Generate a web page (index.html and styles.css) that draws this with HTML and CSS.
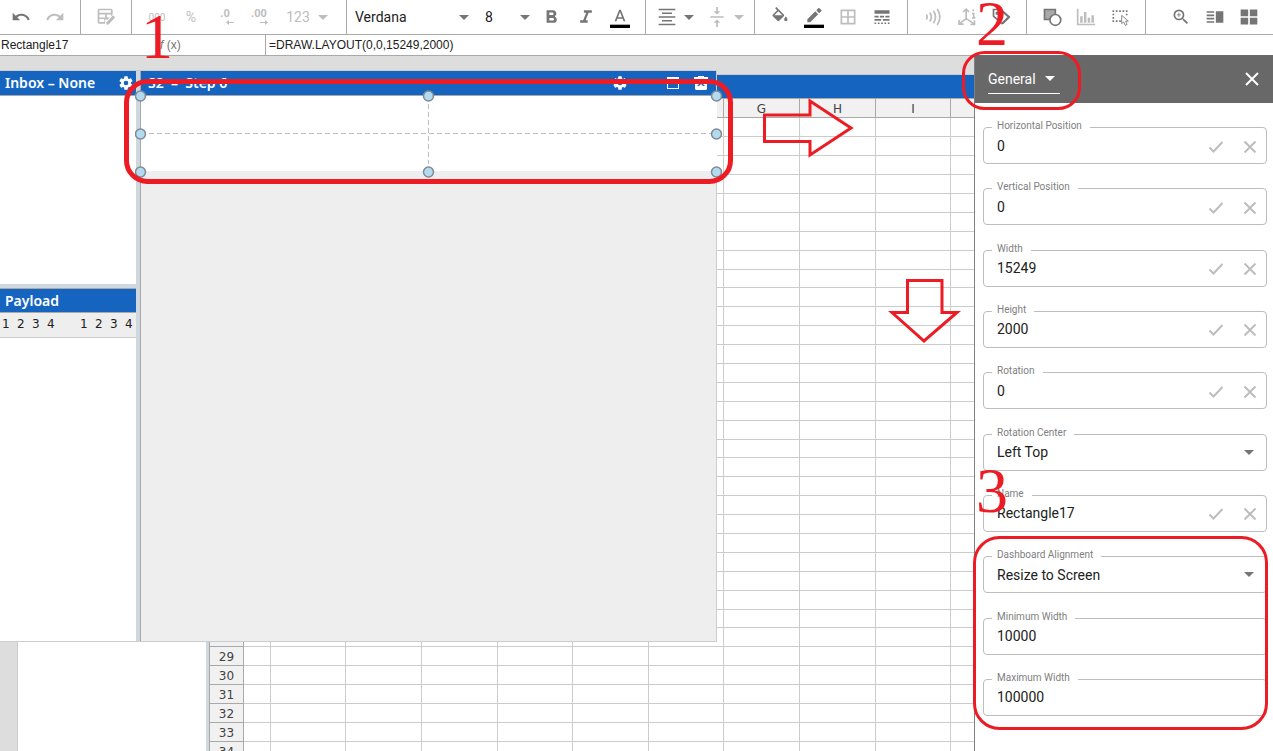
FILE: index.html
```html
<!DOCTYPE html>
<html lang="en">
<head>
<meta charset="utf-8">
<title>Dashboard Designer</title>
<link rel="stylesheet" href="styles.css">
</head>
<body>
<div class="app">
  <header class="toolbar">
    <div class="group group-first">
      <button class="tool" aria-label="Undo"><svg viewBox="0 0 24 24"><path d="M12.5 8c-2.65 0-5.05.99-6.9 2.6L2 7v9h9l-3.62-3.62c1.39-1.16 3.16-1.88 5.12-1.88 3.54 0 6.55 2.31 7.6 5.5l2.37-.78C21.08 11.03 17.15 8 12.5 8z"/></svg></button>
      <button class="tool off" aria-label="Redo"><svg viewBox="0 0 24 24"><path d="M18.4 10.6C16.55 8.99 14.15 8 11.5 8c-4.65 0-8.58 3.03-9.96 7.22L3.9 16c1.05-3.19 4.05-5.5 7.6-5.5 1.95 0 3.73.72 5.12 1.88L13 16h9V7l-3.6 3.6z"/></svg></button>
    </div>
    <div class="group">
      <button class="tool off" aria-label="Edit table"><svg viewBox="0 0 24 24"><path fill-rule="evenodd" d="M4 2h14a2 2 0 0 1 2 2v5l-2 2V9h-5v3.500h3.500L13 16v-1h-2v5H4a2 2 0 0 1-2-2V4a2 2 0 0 1 2-2zM4 9v3.500h7V9zM4 14.500V18h6v-3.500zM4 4v3h14V4z"/><path d="M20.500 10l2.500 2.500-8 8.500h-2.500v-2.500z"/></svg></button>
    </div>
    <div class="group">
      <button class="tool off" aria-label="Thousands separator"><span class="mini">000</span></button>
      <button class="tool off" aria-label="Percent"><span class="percent">%</span></button>
      <button class="tool off decimals" aria-label="Fewer decimals"><span>.0</span><svg class="tiny" viewBox="0 0 8 6"><path d="M3 0v2h5v1H3v2L0 2.500z"/></svg></button>
      <button class="tool off decimals" aria-label="More decimals"><span>.00</span><svg class="tiny" viewBox="0 0 8 6"><path d="M5 0v2H0v1h5v2l3-2.500z"/></svg></button>
      <button class="tool off numfmt" aria-label="Number format"><span>123</span><svg class="caret" viewBox="0 0 10 5"><path d="M0 0h10L5 5z"/></svg></button>
    </div>
    <div class="group">
      <span class="pick pick-font"><select aria-label="Font"><option>Verdana</option></select><svg class="caret" viewBox="0 0 10 5"><path d="M0 0h10L5 5z"/></svg></span>
      <span class="pick pick-size"><select aria-label="Font size"><option>8</option></select><svg class="caret" viewBox="0 0 10 5"><path d="M0 0h10L5 5z"/></svg></span>
      <button class="tool" aria-label="Bold"><svg viewBox="0 0 24 24"><path d="M15.600 10.790c.97-.67 1.650-1.770 1.650-2.790 0-2.260-1.750-4-4-4H5.500v15h8.540c2.090 0 3.710-1.700 3.710-3.790 0-1.520-.86-2.820-2.150-3.420zM8.800 6.700h3.500c.83 0 1.500.67 1.500 1.500s-.67 1.500-1.500 1.500H8.800zm4 9.600h-4v-3.200h4c.83 0 1.600.77 1.600 1.600s-.77 1.600-1.600 1.600z"/></svg></button>
      <button class="tool" aria-label="Italic"><svg viewBox="0 0 24 24"><path d="M9.500 4v3h2.700l-3.600 9H5v3h9v-3h-2.500l3.600-9H19V4z"/></svg></button>
      <button class="tool inked" aria-label="Text colour"><svg viewBox="0 0 24 24"><path d="M11 2L5.500 16h2.250l1.120-3h6.250l1.120 3h2.250L13 2zm-1.380 9L12 4.670 14.380 11z"/><path class="ink" d="M0 20h24v4H0z"/></svg></button>
    </div>
    <div class="group group-split">
      <button class="tool split" aria-label="Horizontal alignment"><svg viewBox="0 0 24 24"><path d="M2 2h20v2H2zM6 6.500h12v2H6zM2 11h20v2H2zM6 15.500h12v2H6zM2 20h20v2H2z"/></svg><svg class="caret" viewBox="0 0 10 5"><path d="M0 0h10L5 5z"/></svg></button>
      <button class="tool off split" aria-label="Vertical alignment"><svg viewBox="0 0 24 24"><path d="M4 11h16v2H4zM11 0h2v5h3l-4 4-4-4h3zM11 24h2v-5h3l-4-4-4 4h3z"/></svg><svg class="caret" viewBox="0 0 10 5"><path d="M0 0h10L5 5z"/></svg></button>
    </div>
    <div class="group">
      <button class="tool" aria-label="Fill colour"><svg viewBox="0 0 24 24"><path d="M16.560 8.940L7.620 0 6.210 1.410l2.380 2.380-5.150 5.150c-.59.59-.59 1.540 0 2.120l5.500 5.500c.29.29.68.44 1.060.44s.77-.15 1.060-.44l5.500-5.500c.59-.58.59-1.530 0-2.120zM5.210 10L10 5.210 14.790 10zM19 11.500s-2 2.170-2 3.500c0 1.100.9 2 2 2s2-.9 2-2c0-1.330-2-3.500-2-3.500z"/></svg></button>
      <button class="tool inked" aria-label="Line colour"><svg viewBox="0 0 24 24"><path d="M4 13.500V17h3.500L17 7.500 13.500 4zM20.700 3.800a1 1 0 0 0 0-1.400L18.600.3a1 1 0 0 0-1.400 0L14.700 2.800l3.500 3.500z"/><path class="ink" d="M0 20h24v4H0z"/></svg></button>
      <button class="tool off" aria-label="Borders"><svg viewBox="0 0 24 24"><path fill-rule="evenodd" d="M3 3h18v18H3zM5 5v6h6V5zM13 5v6h6V5zM5 13v6h6v-6zM13 13v6h6v-6z"/></svg></button>
      <button class="tool" aria-label="Line style"><svg viewBox="0 0 24 24"><path d="M3 4h18v4H3zM3 10.500h5v2H3zM9.500 10.500h5v2h-5zM16 10.500h5v2h-5zM3 14.500h8v2H3zM13 14.500h8v2h-8zM3 18.500h2v2H3zM7 18.500h2v2H7zM11 18.500h2v2h-2zM15 18.500h2v2h-2zM19 18.500h2v2h-2z"/></svg></button>
    </div>
    <div class="group">
      <button class="tool off" aria-label="Signals"><svg class="line" viewBox="0 0 24 24"><path d="M4 9q2 3 0 6M8 6.500q4 5.500 0 11M12.500 4.500q5 7.500 0 15M17 2.500q6.500 9.500 0 19"/></svg></button>
      <button class="tool off" aria-label="Axes"><svg class="line" viewBox="0 0 24 24"><path d="M11 3v11M11 14l-8 6M11 14l9 6M7.500 6L11 2.500 14.500 6M2.500 15.500v5H8M16 21h5v-5M19.500 3v2M18 8h2v5M18 13h4"/></svg></button>
      <button class="tool" aria-label="Tags"><svg class="line" viewBox="0 0 24 24"><path d="M3 3h8l10 9-8 8-10-9zM14 5l8 7-8 8"/><circle cx="7.500" cy="7.500" r="1.200"/></svg></button>
    </div>
    <div class="group">
      <button class="tool" aria-label="Shapes"><svg class="line" viewBox="0 0 24 24"><path class="shade" d="M3 3h13v12H3z"/><circle class="paper" cx="16" cy="15.500" r="6.500"/></svg></button>
      <button class="tool off" aria-label="Charts"><svg viewBox="0 0 24 24"><path d="M1 2h2v18h20v2H1zM5 11h3v8H5zM9.500 6h3v13h-3zM14 13h3v6h-3zM18.500 10h3v9h-3z"/></svg></button>
      <button class="tool" aria-label="Select objects"><svg viewBox="0 0 24 24"><path d="M3 4h2v2H3zM7 4h2v2H7zM11 4h2v2h-2zM15 4h2v2h-2zM19 4h2v2h-2zM3 8h2v2H3zM3 12h2v2H3zM3 16h2v2H3zM7 16h2v2H7zM11 16h2v2h-2zM19 8h2v2h-2z"/><path class="arrow" d="M14 10v10l2.500-2 1.700 4 2.300-1-1.700-4H22z"/></svg></button>
    </div>
    <div class="group group-last">
      <button class="tool" aria-label="Zoom in"><svg viewBox="0 0 24 24"><path d="M15.500 14h-.79l-.28-.27A6.471 6.471 0 0 0 16 9.500 6.500 6.500 0 1 0 9.500 16c1.610 0 3.090-.59 4.230-1.570l.27.280v.79l5 4.990L20.490 19zm-6 0C7.010 14 5 11.990 5 9.500S7.010 5 9.500 5 14 7.010 14 9.500 11.990 14 9.500 14zM12 10h-2v2H9v-2H7V9h2V7h1v2h2z"/></svg></button>
      <button class="tool" aria-label="Side panel"><svg viewBox="0 0 24 24"><path d="M2 5h9v2H2zM2 9h9v2H2zM2 13h9v2H2zM2 17h9v2H2zM13 5h9v14h-9z"/></svg></button>
      <button class="tool" aria-label="Tiles"><svg viewBox="0 0 24 24"><path d="M2 3h9v8H2zM13 3h9v8h-9zM2 13h9v8H2zM13 13h9v8h-9z"/></svg></button>
    </div>
  </header>

  <div class="formula">
    <input class="formula-name" aria-label="Object name" value="Rectangle17">
    <span class="formula-fx"><i>f</i> (x)</span>
    <input class="formula-text" aria-label="Formula" value="=DRAW.LAYOUT(0,0,15249,2000)">
  </div>

  <div class="body">
    <main class="desk">
      <div class="document">
        <div class="outline"></div>
        <section class="sheet">
          <div class="sheet-title"></div>
          <table class="cells">
            <colgroup><col class="c-num"><col class="c-label"><col class="c-a"><col><col><col class="c-a"><col><col class="c-a"><col><col><col class="c-a"><col></colgroup>
            <thead><tr><th></th><th></th><th>A</th><th>B</th><th>C</th><th>D</th><th>E</th><th>F</th><th>G</th><th>H</th><th>I</th><th>J</th></tr></thead>
            <tbody id="rows"></tbody>
          </table>
        </section>
      </div>

      <section class="window">
        <div class="side">
          <div class="side-inbox">
            <h2 class="bar">Inbox – None
              <button class="bar-btn" aria-label="Inbox settings"><svg viewBox="0 0 24 24"><path fill-rule="evenodd" d="M19.430 12.980c.04-.32.07-.64.07-.98s-.03-.66-.07-.98l2.110-1.650a.5.5 0 0 0 .12-.64l-2-3.460a.5.5 0 0 0-.61-.22l-2.490 1a7.300 7.300 0 0 0-1.690-.98l-.38-2.650A.49.49 0 0 0 14 2h-4a.49.49 0 0 0-.49.42l-.38 2.650c-.61.25-1.170.59-1.690.98l-2.490-1a.5.5 0 0 0-.61.22l-2 3.460a.5.5 0 0 0 .12.64l2.110 1.650c-.04.32-.07.65-.07.98s.03.66.07.98l-2.110 1.650a.5.5 0 0 0-.12.64l2 3.460c.12.22.39.3.61.22l2.490-1c.52.4 1.080.73 1.690.98l.38 2.650c.03.24.24.42.49.42h4c.25 0 .46-.18.49-.42l.38-2.650c.61-.25 1.170-.59 1.690-.98l2.490 1c.23.09.49 0 .61-.22l2-3.460a.5.5 0 0 0-.12-.64zM12 15.500a3.500 3.500 0 1 1 0-7 3.500 3.500 0 0 1 0 7z"/></svg></button>
            </h2>
          </div>
          <div class="side-payload">
            <h2 class="bar">Payload</h2>
            <div class="digits"><span>1</span><span>2</span><span>3</span><span>4</span><span class="next">1</span><span>2</span><span>3</span><span>4</span></div>
          </div>
        </div>
        <div class="step">
          <h2 class="bar">S2&nbsp; – &nbsp;Step 6
            <span class="bar-tools">
              <button class="bar-btn" aria-label="Step settings"><svg viewBox="0 0 24 24"><path fill-rule="evenodd" d="M19.430 12.980c.04-.32.07-.64.07-.98s-.03-.66-.07-.98l2.110-1.650a.5.5 0 0 0 .12-.64l-2-3.460a.5.5 0 0 0-.61-.22l-2.490 1a7.300 7.300 0 0 0-1.690-.98l-.38-2.650A.49.49 0 0 0 14 2h-4a.49.49 0 0 0-.49.42l-.38 2.650c-.61.25-1.170.59-1.690.98l-2.490-1a.5.5 0 0 0-.61.22l-2 3.460a.5.5 0 0 0 .12.64l2.110 1.650c-.04.32-.07.65-.07.98s.03.66.07.98l-2.110 1.650a.5.5 0 0 0-.12.64l2 3.460c.12.22.39.3.61.22l2.490-1c.52.4 1.080.73 1.690.98l.38 2.650c.03.24.24.42.49.42h4c.25 0 .46-.18.49-.42l.38-2.650c.61-.25 1.170-.59 1.690-.98l2.490 1c.23.09.49 0 .61-.22l2-3.460a.5.5 0 0 0-.12-.64zM12 15.500a3.500 3.500 0 1 1 0-7 3.500 3.500 0 0 1 0 7z"/></svg></button>
              <button class="bar-btn" aria-label="Maximize"><svg viewBox="0 0 16 16"><path fill-rule="evenodd" d="M2 2h12v12H2zM3 4v9h10V4z"/></svg></button>
              <button class="bar-btn" aria-label="Delete"><svg viewBox="0 0 16 16"><path fill-rule="evenodd" d="M5 1h6v1h4v3h-1v9l-1 1H3l-1-1V5H1V2h4zM4 11h2l2-2 2 2h2L8 7z"/></svg></button>
            </span>
          </h2>
          <div class="canvas">
            <svg class="shape" viewBox="0 0 588 88">
              <path class="shape-fill" d="M6 6h576v75H6z"/>
              <path class="guide" d="M14 43.500h562M293.500 14v60"/>
              <g class="handle"><circle cx="5.500" cy="6" r="5"/><circle cx="293.500" cy="6" r="5"/><circle cx="581.500" cy="6" r="5"/><circle cx="5.500" cy="44" r="5"/><circle cx="581.500" cy="44" r="5"/><circle cx="5.500" cy="82" r="5"/><circle cx="293.500" cy="82" r="5"/><circle cx="581.500" cy="82" r="5"/></g>
            </svg>
          </div>
        </div>
      </section>
    </main>

    <aside class="inspector">
      <div class="inspector-head">
        <span class="pick pick-page"><select aria-label="Property page"><option>General</option></select><svg class="caret" viewBox="0 0 10 5"><path d="M0 0h10L5 5z"/></svg></span>
        <button class="close" aria-label="Close panel"><svg viewBox="0 0 14 14"><path d="M1 1l12 12M13 1L1 13"/></svg></button>
      </div>
      <form class="fields" id="fields"></form>
    </aside>
  </div>

  <svg class="notes" width="1273" height="751" viewBox="0 0 1273 751" aria-label="Annotations">
    <rect class="thick" x="126.500" y="81.500" width="604" height="100" rx="21"/>
    <rect x="963.500" y="52.500" width="116" height="56" rx="21"/>
    <rect x="974.500" y="537.500" width="292" height="191" rx="25"/>
    <path d="M764.500 115H810v-14l41 27-41 27v-13.500h-45.500z"/>
    <path d="M907.500 280.500H942v32h15L924 341l-32-28.500h15.500z"/>
    <text x="141" y="58">1</text>
    <text x="976" y="45">2</text>
    <text x="976" y="512">3</text>
  </svg>
</div>
<script src="app.js"></script>
</body>
</html>
```
FILE: styles.css
```css
* { box-sizing: border-box; }

body {
  margin: 0;
  font-family: Roboto, "Liberation Sans", sans-serif;
  font-size: 14px;
  color: #212121;
  background: #fff;
}

button, input, select {
  margin: 0;
  padding: 0;
  border: 0;
  background: none;
  font: inherit;
  color: inherit;
  appearance: none;
  outline: none;
}

button { cursor: pointer; }

.app {
  position: relative;
  display: flex;
  flex-direction: column;
  height: 100vh;
  overflow: hidden;
}

/* Toolbar */
.toolbar {
  display: flex;
  flex: none;
  height: 35px;
  border-bottom: 1px solid #a9a9a9;
}

.group {
  display: flex;
  align-items: center;
  padding: 0 8px;
  border-right: 1px solid #a9a9a9;
}

.group-first { padding-left: 4px; }
.group-split { gap: 8px; }
.group-last { margin-left: auto; padding-right: 7px; border-right: 0; }

.tool {
  display: flex;
  align-items: center;
  justify-content: center;
  width: 34px;
  height: 34px;
  color: #757575;
}

.tool svg { width: 20px; height: 20px; fill: currentColor; }
.tool.off { color: #bdbdbd; }
.tool .line { fill: none; stroke: currentColor; stroke-width: 2; }
.tool .shade { fill: #a9a9a9; }
.tool .paper { fill: #fff; }
.tool .arrow { fill: #fff; stroke: currentColor; stroke-width: 1; }
.tool .ink { fill: #000; }
.tool.inked { padding-top: 2px; }

.tool svg.caret, .caret { width: 10px; height: 5px; fill: currentColor; }
.tool svg.tiny { width: 8px; height: 6px; }

.tool.numfmt { width: 62px; gap: 8px; }
.tool.split { width: 42px; gap: 7px; }
.mini { font-size: 10px; }
.percent { font-size: 14px; }

.decimals {
  flex-direction: column;
  align-items: center;
  font-size: 11px;
  font-weight: 700;
  line-height: 12px;
}
.decimals svg { align-self: flex-end; margin-right: 8px; }

.pick { position: relative; display: flex; align-items: center; }
.pick select { width: 100%; }
.pick .caret { position: absolute; color: #757575; pointer-events: none; }
.pick-font { width: 126px; margin-right: 4px; }
.pick-font .caret { right: 12px; }
.pick-size { width: 50px; }
.pick-size .caret { right: 5px; }

/* Formula bar */
.formula {
  display: flex;
  flex: none;
  height: 20px;
  font-family: "Liberation Sans", Arial, sans-serif;
  font-size: 12px;
}
.formula-name { width: 160px; padding-left: 1px; }
.formula-fx { width: 105px; line-height: 20px; color: #757575; }
.formula-text { flex: 1; padding-left: 3px; border-left: 1px solid #a9a9a9; }

.body { display: flex; flex: 1; min-height: 0; }

/* Desk with the document below the floating window */
.desk {
  position: relative;
  flex: 1;
  min-width: 0;
  padding-top: 18px;
  overflow: hidden;
  border-top: 1px solid #a9a9a9;
  background: #ddd;
}

.document {
  display: flex;
  height: 100%;
  padding-left: 17px;
  border-top: 1px solid #ccc;
}

.outline {
  flex: none;
  width: 192px;
  border-left: 1px solid #ccc;
  border-right: 3px solid #cfd8df;
  background: #fff;
}

.sheet {
  flex: 1;
  min-width: 0;
  overflow: hidden;
  border-left: 1px solid #a9a9a9;
  background: #fff;
}

.sheet-title { height: 23px; background: #1565c0; }

.cells {
  width: 810px;
  table-layout: fixed;
  border-spacing: 0;
  font-family: "DejaVu Sans", Verdana, sans-serif;
  font-size: 12px;
  line-height: 16px;
  color: #424242;
}

.cells col { width: 76px; }
.cells .c-a { width: 75px; }
.cells .c-num { width: 34px; }
.cells .c-label { width: 27px; }

.cells th, .cells td {
  height: 19px;
  padding: 0;
  border-right: 1px solid #ccc;
  border-bottom: 1px solid #ccc;
}

.cells th {
  border-color: #a9a9a9;
  background: #f1f1f1;
  font-weight: 400;
  text-align: center;
}

.cells thead th { height: 20px; padding-top: 1px; border-top: 1px solid #a9a9a9; }
.cells tbody th { padding-top: 1px; }
.cells tbody tr:nth-child(9n) > * { height: 18px; }

/* Floating dashboard window */
.window {
  position: absolute;
  left: 0;
  top: 14px;
  display: flex;
  width: 717px;
  height: 572px;
  border: solid #ccc;
  border-width: 1px 1px 1px 0;
  background: #fff;
}

.side {
  display: flex;
  flex: none;
  flex-direction: column;
  width: 140px;
  border-right: 4px solid #cfd8df;
}

.side-inbox { flex: none; height: 217px; border-bottom: 4px solid #cfd8df; }
.side-payload { border-top: 1px solid #a9a9a9; }

.bar {
  display: flex;
  align-items: center;
  justify-content: space-between;
  height: 25px;
  margin: 0;
  padding: 0 2px 0 5px;
  border-bottom: 1px solid #a9a9a9;
  background: #1565c0;
  font-family: "Noto Sans", "Open Sans", sans-serif;
  font-size: 14px;
  font-weight: 600;
  line-height: 24px;
  color: #fff;
}
.side-payload .bar { height: 24px; }

.bar-btn { display: flex; }
.bar-btn svg { width: 16px; height: 16px; fill: #fff; }

.bar-tools { display: flex; }
.bar-tools .bar-btn { margin-left: 12px; }
.bar-tools .bar-btn:first-child { margin-right: 25px; }

.digits {
  display: flex;
  height: 25px;
  padding-left: 2px;
  border-bottom: 1px solid #ccc;
  background: #eee;
  font-family: "DejaVu Sans", Verdana, sans-serif;
  font-size: 12px;
  line-height: 22px;
  color: #212121;
}
.digits span { flex: none; width: 15px; }
.digits .next { margin-left: 18px; }

.step {
  display: flex;
  flex: 1;
  flex-direction: column;
  min-width: 0;
  border-left: 1px solid #a9a9a9;
}
.step .bar { padding: 0 7px; }

.canvas { position: relative; flex: 1; background: #eee; }

.shape {
  position: absolute;
  left: -6px;
  top: -6px;
  width: 588px;
  height: 88px;
}
.shape-fill { fill: #fff; }
.guide { fill: none; stroke: #bdbdbd; stroke-dasharray: 5 3; }
.handle { fill: #b3daf0; stroke: #808b91; stroke-width: 1.5; }

/* Inspector */
.inspector {
  display: flex;
  flex: none;
  flex-direction: column;
  width: 299px;
  border-left: 1px solid #808080;
  background: #fff;
}

.inspector-head {
  display: flex;
  flex: none;
  align-items: center;
  justify-content: space-between;
  height: 48px;
  padding: 0 14px 0 13px;
  background: #686868;
  color: #fff;
}

.pick-page { width: 72px; height: 30px; border-bottom: 1px solid #fff; }
.pick-page .caret { right: 5px; color: #fff; }

.close svg { display: block; width: 14px; height: 14px; fill: none; stroke: #fff; stroke-width: 2; }

.fields {
  display: flex;
  flex: 1;
  flex-direction: column;
  justify-content: space-between;
  padding: 24px 6px 35px 8px;
}

.field {
  position: relative;
  display: flex;
  align-items: center;
  gap: 18px;
  height: 37px;
  padding: 0 8px 0 13px;
  border: 1px solid #bdbdbd;
  border-radius: 4px;
}

.field label {
  position: absolute;
  left: 8px;
  top: -8px;
  padding: 0 8px 0 5px;
  background: #fff;
  font-size: 10px;
  line-height: 12px;
  color: #808080;
}

.field input, .field select { flex: 1; min-width: 0; height: 34px; }
.field button svg { display: block; width: 16px; height: 16px; fill: none; stroke: #bdbdbd; stroke-width: 2; }
.field .caret { position: absolute; right: 12px; color: #757575; pointer-events: none; }

/* Red annotations over the whole screen */
.notes {
  position: absolute;
  left: 0;
  top: 0;
  pointer-events: none;
  fill: none;
  stroke: #ed1c24;
  stroke-width: 3;
}
.notes .thick { stroke-width: 5; }
.notes text {
  fill: #ed1c24;
  stroke: none;
  font-family: "Liberation Serif", "Times New Roman", serif;
  font-size: 64px;
}
```
FILE: app.js
```js
const rows = document.getElementById("rows");
for (let n = 1; n <= 34; n++) {
  const tr = document.createElement("tr");
  const th = document.createElement("th");
  th.textContent = n;
  tr.append(th);
  for (let c = 0; c < 11; c++) tr.append(document.createElement("td"));
  rows.append(tr);
}

const fields = [
  ["Horizontal Position", "0", "confirm"],
  ["Vertical Position", "0", "confirm"],
  ["Width", "15249", "confirm"],
  ["Height", "2000", "confirm"],
  ["Rotation", "0", "confirm"],
  ["Rotation Center", "Left Top", "select"],
  ["Name", "Rectangle17", "confirm"],
  ["Dashboard Alignment", "Resize to Screen", "select"],
  ["Minimum Width", "10000", "plain"],
  ["Maximum Width", "100000", "plain"],
];

const caret = '<svg class="caret" viewBox="0 0 10 5"><path d="M0 0h10L5 5z"/></svg>';
const actions =
  '<button type="button" aria-label="Apply"><svg viewBox="0 0 16 16"><path d="M1.500 9.500l4 4L14.500 4"/></svg></button>' +
  '<button type="button" aria-label="Discard"><svg viewBox="0 0 16 16"><path d="M2.500 3.500l11 11M13.500 3.500l-11 11"/></svg></button>';

document.getElementById("fields").innerHTML = fields
  .map(([label, value, kind], i) => {
    const id = "field-" + i;
    const control = kind === "select"
      ? `<select id="${id}"><option>${value}</option></select>${caret}`
      : `<input id="${id}" value="${value}">${kind === "confirm" ? actions : ""}`;
    return `<div class="field"><label for="${id}">${label}</label>${control}</div>`;
  })
  .join("");
```
